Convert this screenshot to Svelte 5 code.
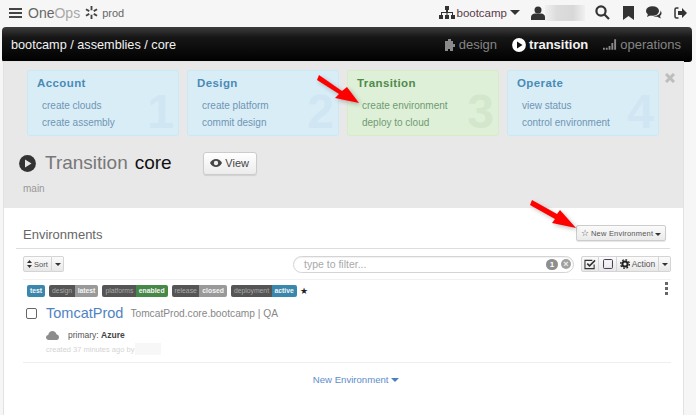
<script>
  const cards = [
    { title: 'Account', links: ['create clouds', 'create assembly'], num: 1 },
    { title: 'Design', links: ['create platform', 'commit design'], num: 2 },
    { title: 'Transition', links: ['create environment', 'deploy to cloud'], num: 3, active: true },
    { title: 'Operate', links: ['view status', 'control environment'], num: 4 }
  ];
  const tags = [
    { solo: 'test', color: '#3a87ad' },
    { name: 'design', value: 'latest', color: '#999' },
    { name: 'platforms', value: 'enabled', color: '#468847' },
    { name: 'release', value: 'closed', color: '#999' },
    { name: 'deployment', value: 'active', color: '#3a87ad' }
  ];
</script>

<div class="page">
  <header class="topbar">
    <div class="brand">
      <svg class="burger" width="13" height="11" viewBox="0 0 13 11"><path d="M0 1h13v2H0zM0 5h13v2H0zM0 9h13v2H0z" fill="#444" /></svg>
      <span class="logo">One<span>Ops</span></span>
      <svg class="spark" width="13" height="13" viewBox="0 0 14 14" stroke="#444" stroke-width="2"><path d="M7 0v4.500M7 9.500V14M1 3.500l3.600 2M9.400 8.500l3.600 2M1 10.500l3.600-2M9.400 5.500l3.600-2" /></svg>
      <span class="prod">prod</span>
    </div>
    <div class="tools">
      <svg class="org-icon" width="16" height="13" viewBox="0 0 16 13" fill="#333"><path d="M6 0h4v4H9v2h5v3h2v4h-4V9h1V7H8.500v2H10v4H6V9h1.500V7H3v2h1v4H0V9h2V6h5V4H6z" /></svg>
      <span class="org">bootcamp</span>
      <span class="caret big"></span>
      <svg class="user" width="14" height="14" viewBox="0 0 14 14" fill="#333"><circle cx="7" cy="4" r="3.500" /><path d="M0 14v-3c0-2 2-3.500 4-3.500h6c2 0 4 1.500 4 3.500v3z" /></svg>
      <span class="blur"></span>
      <svg class="search" width="15" height="15" viewBox="0 0 15 15" fill="none" stroke="#333" stroke-width="2.200"><circle cx="6" cy="6" r="4.600" /><path d="M9.500 9.500l4.500 4.500" /></svg>
      <svg class="mark" width="11" height="14" viewBox="0 0 11 14" fill="#333"><path d="M0 0h11v14L5.500 10 0 14z" /></svg>
      <svg class="chat" width="16" height="13" viewBox="0 0 16 13" fill="#333"><ellipse cx="6.500" cy="5" rx="6.500" ry="4.800" /><path d="M2 8l-1 3 4-2zM14.500 4.500c1.500 2 1.500 4-.5 5.500l.8 2.500-3.500-1.800c-1.500.2-3 0-4-.7 3.500.2 7.500-1.500 7.200-5.500z" /></svg>
      <svg class="exit" width="13" height="12" viewBox="0 0 13 12" fill="#333"><path d="M4.500 1H2.500C1.500 1 1 1.700 1 2.500v7c0 .8.500 1.500 1.500 1.500h2" fill="none" stroke="#333" stroke-width="1.500" /><path d="M8 1l5 5-5 5V8H4V4h4z" /></svg>
    </div>
  </header>

  <nav class="darkbar">
    <div class="crumbs">bootcamp / assemblies / core</div>
    <div class="phases">
      <span class="phase">
        <svg width="12" height="13" viewBox="0 0 12 13" fill="#8a8a8a"><path d="M1 3h3V1h3v2h2v3h2v3H9v4H6v-2H4v2H1z" /></svg>
        design
      </span>
      <span class="phase on">
        <svg width="14" height="14" viewBox="0 0 14 14"><circle cx="7" cy="7" r="6.900" fill="#fff" /><path d="M5 3.500l5.500 3.500L5 10.500z" fill="#111" /></svg>
        transition
      </span>
      <span class="phase">
        <svg width="14" height="11" viewBox="0 0 15 11" fill="#8a8a8a"><path d="M0 9h2v2H0zM3 9h2v2H3zM6 7h2v4H6zM9 4h2v7H9zM12 0h2v11h-2z" /></svg>
        operations
      </span>
    </div>
  </nav>

  <main class="sheet">
    <section class="intro">
      <div class="cards">
        {#each cards as card}
          <div class="card" class:active={card.active}>
            <h4>{card.title}</h4>
            {#each card.links as link}
              <div class="link">{link}</div>
            {/each}
            <span class="num">{card.num}</span>
          </div>
        {/each}
        <svg class="close" width="10" height="10" viewBox="0 0 10 10" stroke="#bdbdbd" stroke-width="3"><path d="M1 1l8 8M9 1l-8 8" /></svg>
      </div>
      <div class="heading">
        <svg width="17" height="17" viewBox="0 0 17 17"><circle cx="8.500" cy="8.500" r="8.400" fill="#333" /><path d="M6 4.500l6.500 4-6.500 4z" fill="#e8e8e8" /></svg>
        <span class="h-grey">Transition</span>
        <span class="h-dark">core</span>
        <button class="view">
          <svg width="12" height="8" viewBox="0 0 12 8"><path d="M0 4c1.500-2.500 3.500-4 6-4s4.500 1.500 6 4c-1.500 2.500-3.500 4-6 4S1.500 6.500 0 4z" fill="#444" /><circle cx="6" cy="4" r="2.200" fill="#eee" /></svg>
          View
        </button>
      </div>
      <div class="sub">main</div>
    </section>

    <section class="env">
      <div class="env-head">
        <span class="env-title">Environments</span>
        <button class="new">
          <span class="star">☆</span> New Environment <span class="caret"></span>
        </button>
      </div>

      <div class="toolbar">
        <div class="group">
          <button class="small sort">
            <svg width="5" height="8" viewBox="0 0 5 8" fill="#333"><path d="M2.500 0L5 3H0zM2.500 8L0 5h5z" /></svg>
            Sort
          </button>
          <button class="small narrow"><span class="caret"></span></button>
        </div>
        <div class="filter">
          <span class="ph">type to filter...</span>
          <span class="count">1</span>
          <span class="clear">×</span>
        </div>
        <div class="group">
          <button class="small box">
            <svg width="12" height="11" viewBox="0 0 13 12" fill="none" stroke="#333" stroke-width="1.200"><path d="M11 6v4.500H1v-9h8" /><path d="M3.500 5l2.500 2.500L12 1.500" stroke-width="1.700" /></svg>
          </button>
          <button class="small box">
            <svg width="10" height="10" viewBox="0 0 11 11" fill="none" stroke="#4a3a55" stroke-width="1.100"><rect x=".6" y=".6" width="9.800" height="9.800" rx="1" /></svg>
          </button>
          <button class="small action">
            <svg class="gear" width="10" height="10" viewBox="0 0 10 10" fill="none" stroke="#222"><circle cx="5" cy="5" r="2.600" stroke-width="2" /><circle cx="5" cy="5" r="4.300" stroke-width="1.400" stroke-dasharray="1.700 1.670" /></svg>
            Action
          </button>
          <button class="small narrow"><span class="caret"></span></button>
        </div>
      </div>

      <div class="list">
        <div class="tags">
          {#each tags as tag}
            {#if tag.solo}
              <span class="tag"><span class="val" style:background={tag.color}>{tag.solo}</span></span>
            {:else}
              <span class="tag"><span class="key">{tag.name}</span><span class="val" style:background={tag.color}>{tag.value}</span></span>
            {/if}
          {/each}
          <span class="fav">★</span>
          <span class="kebab"><i></i><i></i><i></i></span>
        </div>
        <div class="item-title">
          <span class="check"></span>
          <span class="name">TomcatProd</span>
          <span class="fqdn">TomcatProd.core.bootcamp | QA</span>
        </div>
        <div class="cloud">
          <svg width="13" height="9" viewBox="0 0 13 9" fill="#8c8c8c"><path d="M3 9C1 9 0 7.800 0 6.300 0 5 1 4 2.200 3.900 2.700 1.600 4.500 0 6.500 0c2 0 3.500 1.300 4 3.200C12 3.500 13 4.800 13 6.300 13 7.800 12 9 10.500 9z" /></svg>
          <span>primary: <b>Azure</b></span>
        </div>
        <div class="created">created 37 minutes ago by <span class="blur2"></span></div>
      </div>

      <div class="more">New Environment <span class="caret blue"></span></div>
    </section>
  </main>

  <svg class="arrow a1" width="48" height="36" viewBox="0 0 48 36"><path d="M3 1L26 17l5-4 12 16-24-5 4-4L1 6z" fill="#f00" /></svg>
  <svg class="arrow a2" width="52" height="36" viewBox="0 0 52 36"><path d="M3 1l25 14 3-4 16 18-24-5 3-4L1 6z" fill="#f00" /></svg>
</div>

<style>
  :global(body) {
    margin: 0;
    background: #f6f6f6;
  }

  .page {
    position: relative;
    width: 696px;
    height: 415px;
    overflow: hidden;
    font-family: "Liberation Sans", Arial, sans-serif;
    color: #333;
  }

  .topbar {
    height: 27px;
    display: flex;
    justify-content: space-between;
    align-items: center;
    padding: 0 9px 2px 9px;
    box-sizing: border-box;
  }

  .brand,
  .tools {
    display: flex;
    align-items: center;
  }

  .logo {
    margin-left: 6px;
    font-size: 14px;
    color: #666;
  }

  .logo span {
    color: #a8a8a8;
  }

  .spark {
    margin-left: 5px;
  }

  .prod {
    margin-left: 4px;
    font-size: 11px;
    color: #666;
  }

  .org {
    margin-left: 1px;
    font-size: 11.500px;
    color: #5a3a4a;
  }

  .caret {
    display: inline-block;
    width: 0;
    height: 0;
    border-left: 3px solid transparent;
    border-right: 3px solid transparent;
    border-top: 3px solid #333;
    vertical-align: middle;
  }

  .caret.big {
    margin-left: 3px;
    border-left-width: 5px;
    border-right-width: 5px;
    border-top-width: 5px;
  }

  .caret.blue {
    border-top-color: #4a7fc1;
    border-left-width: 4px;
    border-right-width: 4px;
    border-top-width: 4px;
  }

  .user {
    margin-left: 11px;
  }

  .blur {
    width: 40px;
    height: 16px;
    background: linear-gradient(90deg, #f0f0f0, #dcdcdc 30%, #d8d8d8 70%, #f0f0f0);
  }

  .search {
    margin-left: 10px;
  }

  .mark {
    margin-left: 13px;
  }

  .chat {
    margin-left: 12px;
  }

  .exit {
    margin-left: 12px;
  }

  .darkbar {
    margin: 0 4px 0 2px;
    height: 35px;
    display: flex;
    justify-content: space-between;
    align-items: center;
    padding: 0 11px 0 9px;
    border-radius: 4px 4px 3px 3px;
    background: linear-gradient(#3c3c3c, #161616 30%, #000);
  }

  .crumbs {
    font-size: 12.700px;
    color: #f2f2f2;
  }

  .phases {
    display: flex;
    align-items: center;
    gap: 15px;
  }

  .phase {
    display: flex;
    align-items: center;
    gap: 3px;
    font-size: 13px;
    color: #858585;
  }

  .phase.on {
    font-weight: bold;
    color: #f2f2f2;
  }

  .sheet {
    width: 679px;
    margin-left: 4px;
    box-shadow: 0 0 0 1px #e2e2e2;
  }

  .intro {
    height: 146px;
    box-sizing: border-box;
    padding: 8px 0 0 14px;
    background: #e8e8e8;
  }

  .cards {
    display: flex;
    gap: 8px;
    margin-left: 9px;
  }

  .card {
    position: relative;
    width: 152px;
    height: 66px;
    box-sizing: border-box;
    padding: 5px 9px;
    border: 1px solid #c9e9f4;
    border-radius: 3px;
    background: #d9edf7;
    color: #6f95b3;
  }

  .card h4 {
    margin: 0 0 7px;
    font-size: 11.500px;
    line-height: 14px;
    letter-spacing: 0.4px;
    color: #4a8bb5;
  }

  .link {
    margin-left: 5px;
    font-size: 10px;
    line-height: 17px;
  }

  .num {
    position: absolute;
    right: 4px;
    bottom: -2px;
    font-size: 48px;
    line-height: 50px;
    height: 50px;
    font-weight: bold;
    color: #d0e6f3;
  }

  .card.active {
    border-color: #d8ecc8;
    background: #dff0d8;
    color: #6f9a72;
  }

  .card.active h4 {
    color: #4f8a4b;
  }

  .card.active .num {
    color: #d3e7cc;
  }

  .close {
    margin: 3px 0 0 -2px;
  }

  .heading {
    display: flex;
    align-items: center;
    margin: 12px 0 0 1px;
    height: 30px;
  }

  .h-grey {
    margin-left: 9px;
    font-size: 19px;
    color: #777;
  }

  .h-dark {
    margin-left: 7px;
    font-size: 19px;
    color: #111;
  }

  .view {
    display: flex;
    align-items: center;
    gap: 3px;
    width: 54px;
    height: 23px;
    margin-left: 31px;
    justify-content: center;
    padding: 0;
    font: 11px "Liberation Sans", Arial, sans-serif;
    color: #444;
    border: 1px solid #ccc;
    border-radius: 3px;
    background: linear-gradient(#fff, #ececec);
    box-shadow: 0 1px 1px rgba(0, 0, 0, 0.1);
  }

  .sub {
    margin: 5px 0 0 5px;
    font-size: 10px;
    color: #999;
  }

  .env {
    height: 207px;
    box-sizing: border-box;
    padding-top: 15px;
    background: #fff;
  }

  .env-head {
    display: flex;
    justify-content: space-between;
    height: 25px;
    margin: 0 13px 0 12px;
    padding: 0 4px 0 7px;
    border-bottom: 1px solid #ddd;
  }

  .env-title {
    font-size: 13px;
    line-height: 24px;
    color: #666;
  }

  .new {
    width: 90px;
    height: 16px;
    margin-top: 2px;
    padding: 0;
    font: 7.500px "Liberation Sans", Arial, sans-serif;
    letter-spacing: 0.2px;
    color: #555;
    border: 1px solid #ccc;
    border-radius: 2px;
    background: linear-gradient(#fbfbfb, #eaeaea);
    box-shadow: 0 1px 1px rgba(0, 0, 0, 0.1);
  }

  .star {
    font-size: 9px;
  }

  .toolbar {
    display: flex;
    align-items: center;
    height: 31px;
    margin: 0 12px 0 19px;
    border-bottom: 1px solid #f1f1f1;
    box-sizing: border-box;
  }

  .group {
    display: flex;
  }

  .small {
    height: 16px;
    padding: 0 5px;
    font: 7.500px "Liberation Sans", Arial, sans-serif;
    color: #555;
    border: 1px solid #d4d4d4;
    border-left-width: 0;
    background: linear-gradient(#fbfbfb, #e8e8e8);
    display: flex;
    align-items: center;
    justify-content: center;
  }

  .small:first-child {
    border-left-width: 1px;
    border-radius: 2px 0 0 2px;
  }

  .small:last-child {
    border-radius: 0 2px 2px 0;
  }

  .sort {
    width: 29px;
    gap: 2px;
    padding: 0;
  }

  .narrow {
    width: 12px;
    padding: 0;
  }

  .box {
    width: 18px;
    padding: 0;
  }

  .action {
    width: 42px;
    padding: 0;
    font-size: 8.500px;
  }

  .gear {
    margin-right: 2px;
  }

  .filter {
    display: flex;
    align-items: center;
    width: 281px;
    height: 17px;
    box-sizing: border-box;
    margin: 0 7px 0 auto;
    padding: 0 2px 0 10px;
    border: 1px solid #d4d4d4;
    border-radius: 9px;
    background: #fff;
    box-shadow: inset 0 1px 1px rgba(0, 0, 0, 0.06);
  }

  .ph {
    flex: 1;
    font-size: 10.500px;
    color: #aaa;
  }

  .count {
    width: 12px;
    height: 11px;
    border-radius: 6px;
    background: #8e8e8e;
    color: #fff;
    font-size: 8px;
    font-weight: bold;
    line-height: 11px;
    text-align: center;
  }

  .clear {
    width: 10px;
    height: 10px;
    margin-left: 3px;
    border-radius: 50%;
    background: #a0a0a0;
    color: #eee;
    font-size: 9px;
    font-weight: bold;
    line-height: 10px;
    text-align: center;
  }

  .list {
    margin: 0 12px 0 19px;
    height: 78px;
    border-bottom: 1px solid #eee;
  }

  .tags {
    position: relative;
    display: flex;
    align-items: center;
    gap: 4px;
    height: 13px;
    margin: 4px 0 0 4px;
  }

  .tag {
    display: flex;
    height: 12px;
    overflow: hidden;
    border-radius: 2px;
    font-size: 6.800px;
    line-height: 12px;
    font-weight: bold;
    color: #f4f4f4;
  }

  .key {
    padding: 0 2.500px 0 3px;
    background: #555;
    color: #aaa;
    font-weight: normal;
  }

  .val {
    padding: 0 3px;
  }

  .fav {
    margin-left: -1px;
    font-size: 9px;
    color: #222;
  }

  .kebab {
    position: absolute;
    right: 3px;
    top: -2px;
    display: flex;
    flex-direction: column;
    gap: 2px;
  }

  .kebab i {
    width: 3px;
    height: 3px;
    background: #666;
  }

  .item-title {
    display: flex;
    align-items: center;
    margin: 6px 0 0 3px;
    height: 20px;
  }

  .check {
    width: 9px;
    height: 9px;
    border: 1.500px solid #666;
    border-radius: 2px;
  }

  .name {
    margin-left: 9px;
    font-size: 14.500px;
    color: #4f83c4;
  }

  .fqdn {
    margin-left: 7px;
    font-size: 10.200px;
    color: #888;
  }

  .cloud {
    display: flex;
    align-items: center;
    gap: 9px;
    margin: 6px 0 0 23px;
    height: 12px;
    font-size: 8.500px;
    color: #555;
  }

  .cloud b {
    color: #444;
  }

  .created {
    display: flex;
    align-items: center;
    margin: 3px 0 0 23px;
    height: 10px;
    font-size: 7.500px;
    color: #d4d4d4;
  }

  .blur2 {
    width: 26px;
    height: 12px;
    margin-left: 1px;
    background: #f7f7f7;
  }

  .more {
    margin-top: 11px;
    padding-left: 25px;
    text-align: center;
    font-size: 9.600px;
    color: #5e8dcb;
  }

  .arrow {
    position: absolute;
    filter: drop-shadow(2px 2px 2px rgba(0, 0, 0, 0.25));
  }

  .a1 {
    left: 316px;
    top: 74px;
  }

  .a2 {
    left: 529px;
    top: 199px;
  }
</style>
